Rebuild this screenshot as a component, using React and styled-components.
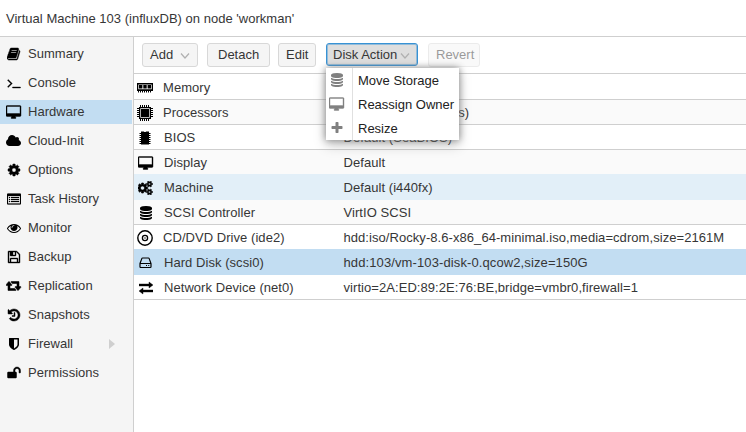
import React from "react";
import styled, { createGlobalStyle } from "styled-components";

const Global = createGlobalStyle`
  * { box-sizing: border-box; }
  body { margin: 0; background: #fff; overflow: hidden; }
`;

const Window = styled.div`
  width: 746px;
  height: 432px;
  display: flex;
  flex-direction: column;
  background: #fff;
  color: #363636;
  font: 13px/24px "Liberation Sans", Arial, sans-serif;
  white-space: nowrap;
`;
const Title = styled.header`
  height: 37px;
  padding: 7px 0 0 6px;
  border-bottom: 1px solid #cfcfcf;
  line-height: 23px;
`;
const Label = styled.span`
  letter-spacing: ${(p) => p.$ls || 0}px;
`;
const Body = styled.div`
  flex: 1;
  display: flex;
  min-height: 0;
`;
const Sidebar = styled.nav`
  width: 134px;
  padding-top: 5px;
  display: flex;
  flex-direction: column;
  gap: 5px;
  background: #f5f5f5;
  border-right: 1px solid #cfcfcf;
`;
const NavItem = styled.div`
  width: 132px;
  height: 24px;
  display: flex;
  align-items: center;
  background: ${(p) => (p.$selected ? "#c2ddf2" : "transparent")};
`;
const NavIcon = styled.span`
  width: 16px;
  height: 24px;
  margin: 0 6px 0 6px;
  display: flex;
  align-items: center;
  justify-content: center;
  color: #000;
`;
const Expander = styled.span`
  margin-left: auto;
  margin-right: 17px;
  border-left: 6px solid #cfcfcf;
  border-top: 5px solid transparent;
  border-bottom: 5px solid transparent;
`;
const Main = styled.main`
  flex: 1;
  min-width: 0;
`;
const Toolbar = styled.div`
  height: 37px;
  padding: 6px 0 0 8px;
  display: flex;
  border-bottom: 1px solid #cfcfcf;
`;
const Button = styled.div`
  position: relative;
  width: ${(p) => p.$w}px;
  height: 24px;
  margin-right: ${(p) => p.$gap}px;
  padding-left: ${(p) => p.$pad}px;
  display: flex;
  align-items: center;
  border: 1px solid #d8d8d8;
  border-radius: 3px;
  background: #f5f5f5;
  line-height: 22px;
  opacity: ${(p) => (p.$disabled ? 0.5 : 1)};
  ${(p) => p.$active && "background: #dedede; border: 1px solid #3892d4; box-shadow: inset 0 0 0 1px rgba(56,146,212,.45); height: 23px;"}
`;
const Chevron = styled.svg`
  position: absolute;
  right: 7px;
  top: 8px;
`;
const Menu = styled.div`
  position: absolute;
  left: -1px;
  top: 24px;
  z-index: 2;
  width: 133px;
  height: 72px;
  background: #fff;
  box-shadow: 0 0 7px #888, 0 5px 12px rgba(0, 0, 0, 0.22);
`;
const MenuItem = styled.div`
  height: 24px;
  display: flex;
  line-height: 25px;
  color: #222;
`;
const MenuIcon = styled.span`
  width: 27px;
  height: 24px;
  padding-left: ${(p) => p.$pad}px;
  margin-right: 5px;
  display: flex;
  align-items: center;
  border-right: 1px solid #e0e0e0;
  color: #808080;
`;
const rowBg = { plain: "#fff", alt: "#fafafa", hover: "#e2eff8", selected: "#c2ddf2" };
const Row = styled.div`
  height: ${(p) => (p.$first ? 26 : 25)}px;
  padding-top: ${(p) => (p.$first ? 3 : 2)}px;
  display: flex;
  align-items: center;
  background: ${(p) => rowBg[p.$kind]};
  border-bottom: 1px solid ${(p) => p.$line || "#cfcfcf"};
  line-height: 22px;
`;
const RowIcon = styled.span`
  width: 24px;
  padding-left: ${(p) => p.$pad}px;
  display: flex;
  align-items: center;
  color: #000;
`;
const Name = styled.span`
  width: 180px;
  padding-left: ${(p) => p.$pad}px;
`;
const Value = styled.span`
  padding-left: 5.5px;
`;

const glyphs = {
  book: ["0 0 1792 1792", 14, 14, "M1639 478q40 57 18 129l-275 906q-19 64-76.5 107.5t-122.5 43.5h-923q-77 0-148.5-53.5t-99.5-131.5q-24-67-2-127 0-4 3-27t4-37q1-8-3-21.5t-3-19.5q2-11 8-21t16.5-23.5 16.5-23.5q23-38 45-91.5t30-91.5q3-10 .5-30t-.5-28q3-11 17-28t17-23q21-36 42-92t25-90q1-9-2.5-32t.5-28q4-13 22-30.5t22-22.5q19-26 42.5-84.5t27.5-96.5q1-8-3-25.5t-2-26.5q2-8 9-18t18-23 17-21q8-12 16.5-30.5t15-35 16-36 19.5-32 26.5-23.5 36-11.5 47.5 5.5l-1 3q38-9 51-9h761q74 0 114 56t18 130l-274 906q-36 119-71.5 153.5t-128.5 34.5h-869q-27 0-38 15-11 16-1 43 24 70 144 70h923q29 0 56-15.5t35-41.5l300-987q7-22 5-57 38 15 59 43zm-1064 2q-4 13 2 22.5t20 9.5h608q13 0 25.5-9.5t16.5-22.5l21-64q4-13-2-22.5t-20-9.5h-608q-13 0-25.5 9.5t-16.5 22.5zm-83 256q-4 13 2 22.5t20 9.5h608q13 0 25.5-9.5t16.5-22.5l21-64q4-13-2-22.5t-20-9.5h-608q-13 0-25.5 9.5t-16.5 22.5z", 60],
  terminal: ["0 0 1792 1792", 14, 14, "M649 983l-466 466q-10 10-23 10t-23-10l-50-50q-10-10-10-23t10-23l393-393-393-393q-10-10-10-23t10-23l50-50q10-10 23-10t23 10l466 466q10 10 10 23t-10 23zm1079 457v64q0 14-9 23t-23 9h-960q-14 0-23-9t-9-23v-64q0-14 9-23t23-9h960q14 0 23 9t9 23z", 50],
  desktop: ["-64 -64 2048 1792", 16, 14, "M1728 992v-832q0-13-9.5-22.5t-22.5-9.5h-1600q-13 0-22.5 9.5t-9.5 22.5v832q0 13 9.5 22.5t22.5 9.5h1600q13 0 22.5-9.5t9.5-22.5zm128-832v1088q0 66-47 113t-113 47h-544q0 37 16 77.5t32 71 16 43.5q0 26-19 45t-45 19h-512q-26 0-45-19t-19-45q0-14 16-44t32-70 16-78h-544q-66 0-113-47t-47-113v-1088q0-66 47-113t113-47h1600q66 0 113 47t47 113z", 50],
  cloud: ["64 0 2048 1792", 16, 14, "M1984 1152q0 159-112.5 271.5t-271.5 112.5h-1088q-185 0-316.5-131.5t-131.5-316.5q0-132 71-241.5t187-163.5q-2-28-2-43 0-212 150-362t362-150q158 0 286.5 88t187.5 230q70-62 166-62 106 0 181 75t75 181q0 75-41 138 129 30 213 134.5t84 239.5z"],
  cog: ["0 0 1792 1792", 14, 14, "M1152 896q0-106-75-181t-181-75-181 75-75 181 75 181 181 75 181-75 75-181zm512-109v222q0 12-8 23t-20 13l-185 28q-19 54-39 91 35 50 107 138 10 12 10 25t-9 23q-27 37-99 108t-94 71q-12 0-26-9l-138-108q-44 23-91 38-16 136-29 186-7 28-36 28h-222q-14 0-24.5-8.5t-11.5-21.5l-28-184q-49-16-90-37l-141 107q-10 9-25 9-14 0-25-11-126-114-165-168-7-10-7-23 0-12 8-23 15-21 51-66.5t54-70.5q-27-50-41-99l-183-27q-13-2-21-12.5t-8-23.5v-222q0-12 8-23t19-13l186-28q14-46 39-92-40-57-107-138-10-12-10-24 0-10 9-23 26-36 98.5-107.5t94.5-71.5q13 0 26 10l138 107q44-23 91-38 16-136 29-186 7-28 36-28h222q14 0 24.5 8.5t11.5 21.5l28 184q49 16 90 37l142-107q9-9 24-9 13 0 25 10 129 119 165 170 7 8 7 22 0 12-8 23-15 21-51 66.5t-54 70.5q26 50 41 98l183 28q13 2 21 12.5t8 23.5z", 60],
  cogs: ["0 0 1920 1792", 15, 14, "M832 896q0-106-75-181t-181-75-181 75-75 181 75 181 181 75 181-75 75-181zm768 512q0-52-38-90t-90-38-90 38-38 90q0 53 37.5 90.5t90.5 37.5 90.5-37.5 37.5-90.5zm0-1024q0-52-38-90t-90-38-90 38-38 90q0 53 37.5 90.5t90.5 37.5 90.5-37.5 37.5-90.5zm-384 421v185q0 10-7 19.5t-16 10.5l-155 24q-11 35-32 76 34 48 90 115 7 11 7 20 0 12-7 19-23 30-82.5 89.5t-78.5 59.5q-11 0-21-7l-115-90q-37 19-77 31-11 108-23 155-7 24-30 24h-186q-11 0-20-7.5t-10-17.5l-23-153q-34-10-75-31l-118 89q-7 7-20 7-11 0-21-8-144-133-144-160 0-9 7-19 10-14 41-53t47-61q-23-44-35-82l-152-24q-10-1-17-9.5t-7-19.5v-185q0-10 7-19.5t16-10.5l155-24q11-35 32-76-34-48-90-115-7-11-7-20 0-12 7-20 22-30 82-89t79-59q11 0 21 7l115 90q34-18 77-32 11-108 23-154 7-24 30-24h186q11 0 20 7.5t10 17.5l23 153q34 10 75 31l118-89q8-7 20-7 11 0 21 8 144 133 144 160 0 8-7 19-12 16-42 54t-45 60q23 48 34 82l152 23q10 2 17 10.5t7 19.5zm640 533v140q0 16-149 31-12 27-30 52 51 113 51 138 0 4-4 7-122 71-124 71-8 0-46-47t-52-68q-20 2-30 2t-30-2q-14 21-52 68t-46 47q-2 0-124-71-4-3-4-7 0-25 51-138-18-25-30-52-149-15-149-31v-140q0-16 149-31 13-29 30-52-51-113-51-138 0-4 4-7 4-2 35-20t59-34 30-16q8 0 46 46.5t52 67.5q20-2 30-2t30 2q51-71 92-112l6-2q4 0 124 70 4 3 4 7 0 25-51 138 17 23 30 52 149 15 149 31zm0-1024v140q0 16-149 31-12 27-30 52 51 113 51 138 0 4-4 7-122 71-124 71-8 0-46-47t-52-68q-20 2-30 2t-30-2q-14 21-52 68t-46 47q-2 0-124-71-4-3-4-7 0-25 51-138-18-25-30-52-149-15-149-31v-140q0-16 149-31 13-29 30-52-51-113-51-138 0-4 4-7 4-2 35-20t59-34 30-16q8 0 46 46.5t52 67.5q20-2 30-2t30 2q51-71 92-112l6-2q4 0 124 70 4 3 4 7 0 25-51 138 17 23 30 52 149 15 149 31z", 90],
  list: ["0 0 14 14", 14, 14, "M1 1.5h12a1 1 0 0 1 1 1v9a1 1 0 0 1-1 1H1a1 1 0 0 1-1-1v-9a1 1 0 0 1 1-1zM1 4v7.5h12V4zM2 5h1v1H2zM4 5h8v1H4zM2 7h1v1H2zM4 7h8v1H4zM2 9h1v1H2zM4 9h8v1H4z", 0.2],
  eye: ["0 0 1792 1792", 14, 14, "M1664 960q-152-236-381-353 61 104 61 225 0 185-131.5 316.5t-316.5 131.5-316.5-131.5-131.5-316.5q0-121 61-225-229 117-381 353 133 205 333.5 326.5t434.5 121.5 434.5-121.5 333.5-326.5zm-720-384q0-20-14-34t-34-14q-125 0-214.5 89.5t-89.5 214.5q0 20 14 34t34 14 34-14 14-34q0-86 61-147t147-61q20 0 34-14t14-34zm848 384q0 34-20 69-140 230-376.5 368.5t-499.5 138.5-499.5-139-376.5-368q-20-35-20-69t20-69q140-229 376.5-368t499.5-139 499.5 139 376.5 368q20 35 20 69z"],
  floppy: ["0 0 1792 1792", 14, 14, "M512 1536h768v-384h-768v384zm896 0h128v-896q0-14-10-38.5t-20-34.5l-281-281q-10-10-34-20t-39-10v416q0 40-28 68t-68 28h-576q-40 0-68-28t-28-68v-416h-128v1280h128v-416q0-40 28-68t68-28h832q40 0 68 28t28 68v416zm-384-928v-320q0-13-9.5-22.5t-22.5-9.5h-192q-13 0-22.5 9.5t-9.5 22.5v320q0 13 9.5 22.5t22.5 9.5h192q13 0 22.5-9.5t9.5-22.5zm640 32v928q0 40-28 68t-68 28h-1344q-40 0-68-28t-28-68v-1344q0-40 28-68t68-28h928q40 0 88 20t76 48l280 280q28 28 48 76t20 88z", 50],
  retweet: ["0 64 2048 1792", 16, 14, "M1280 1504q0 13-9.5 22.5t-22.5 9.5h-960q-8 0-13.5-2t-9-7-5.5-8-3-11.5-1-11.5v-600h-192q-26 0-45-19t-19-45q0-24 15-41l320-384q19-22 49-22t49 22l320 384q15 17 15 41 0 26-19 45t-45 19h-192v384h576q16 0 25 11l160 192q7 10 7 21zm640-416q0 24-15 41l-320 384q-20 23-49 23t-49-23l-320-384q-15-17-15-41 0-26 19-45t45-19h192v-384h-576q-16 0-25-12l-160-192q-7-9-7-20 0-13 9.5-22.5t22.5-9.5h960q8 0 13.5 2t9 7 5.5 8 3 11.5 1 11.5v600h192q26 0 45 19t19 45z", 70],
  history: ["0 0 1792 1792", 14, 14, "M1664 896q0 156-61 298t-164 245-245 164-298 61q-172 0-327-72.5t-264-204.5q-7-10-6.5-22.5t8.5-20.5l137-138q10-9 25-9 16 2 23 12 73 95 179 147t225 52q104 0 198.5-40.5t163.5-109.5 109.5-163.5 40.5-198.5-40.5-198.5-109.5-163.5-163.5-109.5-198.5-40.5q-98 0-188 35.5t-160 101.5l137 138q31 30 14 69-17 40-59 40h-448q-26 0-45-19t-19-45v-448q0-42 40-59 39-17 69 14l130 129q107-101 244.5-156.5t284.5-55.5q156 0 298 61t245 164 164 245 61 298zm-640-288v448q0 14-9 23t-23 9h-320q-14 0-23-9t-9-23v-64q0-14 9-23t23-9h224v-352q0-14 9-23t23-9h64q14 0 23 9t9 23z", 60],
  shield: ["0 0 1792 1792", 14, 14, "M1344 960v-640h-448v1137q119-63 213-137 235-184 235-360zm192-768v768q0 86-33.5 170.5t-83 150-118 127.5-126.5 103-121 77.5-89.5 49.5-42.5 20q-12 6-26 6t-26-6q-16-7-42.5-20t-89.5-49.5-121-77.5-126.5-103-118-127.5-83-150-33.5-170.5v-768q0-26 19-45t45-19h1152q26 0 45 19t19 45z"],
  unlock: ["0 0 1792 1792", 14, 14, "M1728 576v256q0 26-19 45t-45 19h-64q-26 0-45-19t-19-45v-256q0-106-75-181t-181-75-181 75-75 181v192h96q40 0 68 28t28 68v576q0 40-28 68t-68 28h-960q-40 0-68-28t-28-68v-576q0-40 28-68t68-28h672v-192q0-185 131.5-316.5t316.5-131.5 316.5 131.5 131.5 316.5z", 60],
  database: ["0 0 1792 1792", 14, 14, "M896 768q237 0 443-43t325-127v170q0 69-103 128t-280 93.5-385 34.5-385-34.5-280-93.5-103-128v-170q119 84 325 127t443 43zm0 768q237 0 443-43t325-127v170q0 69-103 128t-280 93.5-385 34.5-385-34.5-280-93.5-103-128v-170q119 84 325 127t443 43zm0-384q237 0 443-43t325-127v170q0 69-103 128t-280 93.5-385 34.5-385-34.5-280-93.5-103-128v-170q119 84 325 127t443 43zm0-1152q208 0 385 34.5t280 93.5 103 128v128q0 69-103 128t-280 93.5-385 34.5-385-34.5-280-93.5-103-128v-128q0-69 103-128t280-93.5 385-34.5z"],
  plus: ["0 0 1792 1792", 14, 14, "M1600 736v192q0 40-28 68t-68 28h-416v416q0 40-28 68t-68 28h-192q-40 0-68-28t-28-68v-416h-416q-40 0-68-28t-28-68v-192q0-40 28-68t68-28h416v-416q0-40 28-68t68-28h192q40 0 68 28t28 68v416h416q40 0 68 28t28 68z"],
  memory: ["0 0 16 16", 16, 16, "M0 3h16v8H0zM1.3 4.5v4.7h13.4V4.5zM2 5h3.4v3.4H2zM6.3 5h3.4v3.4H6.3zM10.6 5H14v3.4h-3.4zM1 11h1v1.4H1zM3 11h1v1.4H3zM5 11h1v1.4H5zM7 11h1v1.4H7zM9 11h1v1.4H9zM11 11h1v1.4h-1zM13 11h1v1.4h-1z"],
  cpu: ["0 0 16 16", 16, 16, "M2 2h12v12H2zM3.3 3.3v9.4h9.4V3.3zM4 4h8v8H4zM3 0h1v2H3zM5 0h1v2H5zM7 0h1v2H7zM9 0h1v2H9zM11 0h1v2h-1zM3 14h1v2H3zM5 14h1v2H5zM7 14h1v2H7zM9 14h1v2H9zM11 14h1v2h-1zM0 3h2v1H0zM0 5h2v1H0zM0 7h2v1H0zM0 9h2v1H0zM0 11h2v1H0zM14 3h2v1h-2zM14 5h2v1h-2zM14 7h2v1h-2zM14 9h2v1h-2zM14 11h2v1h-2z"],
  chip: ["0 0 16 16", 16, 16, "M4 1.5h2.8q1.2 1 2.4 0H12v13H4zM2.5 3h1.5v1H2.5zM2.5 5h1.5v1H2.5zM2.5 7h1.5v1H2.5zM2.5 9h1.5v1H2.5zM2.5 11h1.5v1H2.5zM2.5 13h1.5v1H2.5zM12 3h1.5v1H12zM12 5h1.5v1H12zM12 7h1.5v1H12zM12 9h1.5v1H12zM12 11h1.5v1H12zM12 13h1.5v1H12z"],
  exchange: ["0 0 14 14", 14, 14, "M0 3h10V1l4 3-4 3V5H0zM14 9H4V7l-4 3 4 3v-2h10z", 0.4],
};

const iconPad = { memory: 3, cpu: 3, chip: 3, disc: 3, desktop: 4, cogs: 4 };

const Glyph = ({ name }) => {
  if (name === "disc")
    return (
      <svg width="16" height="16" viewBox="0 0 16 16" fill="none" stroke="currentColor">
        <circle cx="8" cy="8" r="7.2" strokeWidth="1.4" />
        <circle cx="8" cy="8" r="2.6" strokeWidth="1.3" />
        <circle cx="8" cy="8" r=".7" fill="currentColor" stroke="none" />
      </svg>
    );
  if (name === "hdd")
    return (
      <svg width="14" height="14" viewBox="0 0 14 14" fill="none" stroke="currentColor" strokeWidth="1.2">
        <path d="M1 7.5L2.8 2.6Q3 2 3.6 2h5.8q.6 0 .8.6L12 7.5v3.2q0 .8-.8.8H1.8q-.8 0-.8-.8zM1 7.5h11M7 9.5h1M9.2 9.5h1" />
      </svg>
    );
  const [viewBox, w, h, d, weight = 0] = glyphs[name];
  return (
    <svg width={w} height={h} viewBox={viewBox} fill="currentColor" fillRule="evenodd" stroke="currentColor" strokeWidth={weight}>
      <path d={d} />
    </svg>
  );
};

const Arrow = () => (
  <Chevron width="10" height="8" viewBox="0 0 10 8" fill="none" stroke="#b0b0b0" strokeWidth="1.2">
    <path d="M1 1.5l4 4.5 4-4.5" />
  </Chevron>
);

const nav = [
  ["book", "Summary"],
  ["terminal", "Console"],
  ["desktop", "Hardware"],
  ["cloud", "Cloud-Init"],
  ["cog", "Options"],
  ["list", "Task History"],
  ["eye", "Monitor"],
  ["floppy", "Backup"],
  ["retweet", "Replication"],
  ["history", "Snapshots"],
  ["shield", "Firewall"],
  ["unlock", "Permissions"],
];

const rows = [
  { icon: "memory", name: "Memory", pad: 5, value: "", kind: "plain" },
  { icon: "cpu", name: "Processors", pad: 5, value: "2 (1 sockets, 2 cores)", kind: "alt" },
  { icon: "chip", name: "BIOS", pad: 6, value: "Default (SeaBIOS)", kind: "plain" },
  { icon: "desktop", name: "Display", pad: 6, value: "Default", kind: "alt", line: "#e2eff8" },
  { icon: "cogs", name: "Machine", pad: 6, value: "Default (i440fx)", kind: "hover", line: "#e2eff8" },
  { icon: "database", name: "SCSI Controller", pad: 6, value: "VirtIO SCSI", kind: "alt" },
  { icon: "disc", name: "CD/DVD Drive (ide2)", pad: 5, value: "hdd:iso/Rocky-8.6-x86_64-minimal.iso,media=cdrom,size=2161M", kind: "plain", line: "#c2ddf2" },
  { icon: "hdd", name: "Hard Disk (scsi0)", pad: 6, value: "hdd:103/vm-103-disk-0.qcow2,size=150G", kind: "selected", line: "#c2ddf2" },
  { icon: "exchange", name: "Network Device (net0)", pad: 6, value: "virtio=2A:ED:89:2E:76:BE,bridge=vmbr0,firewall=1", kind: "plain" },
];

const menu = [
  ["database", "Move Storage", 4],
  ["desktop", "Reassign Owner", 3],
  ["plus", "Resize", 4],
];

export default function App() {
  return (
    <Window>
      <Global />
      <Title><Label $ls={0.02}>Virtual Machine 103 (influxDB) on node 'workman'</Label></Title>
      <Body>
        <Sidebar>
          {nav.map(([icon, text]) => (
            <NavItem key={text} $selected={text === "Hardware"}>
              <NavIcon><Glyph name={icon} /></NavIcon>
              <Label $ls={0.03}>{text}</Label>
              {text === "Firewall" && <Expander />}
            </NavItem>
          ))}
        </Sidebar>
        <Main>
          <Toolbar>
            <Button $w={56} $gap={9} $pad={7}><Label>Add</Label><Arrow /></Button>
            <Button $w={63} $gap={8} $pad={10}><Label>Detach</Label></Button>
            <Button $w={38} $gap={10} $pad={7}><Label>Edit</Label></Button>
            <Button $w={92} $gap={10} $pad={6} $active>
              <Label>Disk Action</Label><Arrow />
              <Menu>
                {menu.map(([icon, text, pad]) => (
                  <MenuItem key={text}>
                    <MenuIcon $pad={pad}><Glyph name={icon} /></MenuIcon>
                    <Label>{text}</Label>
                  </MenuItem>
                ))}
              </Menu>
            </Button>
            <Button $w={52} $gap={0} $pad={7} $disabled><Label>Revert</Label></Button>
          </Toolbar>
          {rows.map((r, i) => (
            <Row key={r.name} $first={i === 0} $kind={r.kind} $line={r.line}>
              <RowIcon $pad={iconPad[r.icon] || 5}><Glyph name={r.icon} /></RowIcon>
              <Name $pad={r.pad}><Label $ls={0.05}>{r.name}</Label></Name>
              <Value><Label $ls={r.icon === "hdd" ? 0.11 : 0.06}>{r.value}</Label></Value>
            </Row>
          ))}
        </Main>
      </Body>
    </Window>
  );
}
